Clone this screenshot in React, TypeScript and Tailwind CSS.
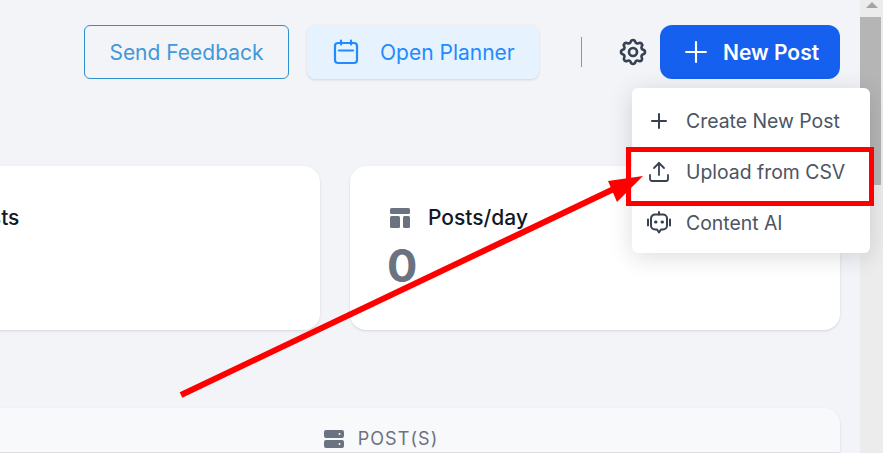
import { Plus, Upload } from 'lucide-react';
import { TbSettings } from 'react-icons/tb';

function CalendarIcon() {
  return (
    <svg width="26" height="26" viewBox="0 0 26 26" fill="none" stroke="currentColor" strokeWidth="2.2" strokeLinecap="round" strokeLinejoin="round">
      <rect x="2" y="4" width="22" height="20" rx="3" />
      <path d="M8 1.500v4M18 1.500v4" />
      <path d="M6 11.500h14" />
    </svg>
  );
}

function BotIcon() {
  return (
    <svg width="24" height="24" viewBox="0 0 24 24" fill="none" stroke="currentColor" strokeWidth="2" strokeLinecap="round" strokeLinejoin="round">
      <path d="M12 1v2.500" />
      <path d="M8 3.500h8a4 4 0 0 1 4 4v7a4 4 0 0 1-4 4h-2l-2 3-2-3H8a4 4 0 0 1-4-4v-7a4 4 0 0 1 4-4z" />
      <path d="M8.500 11h.5M15 11h.5" strokeWidth="3" />
      <path d="M1 8.500v6M23 8.500v6" />
    </svg>
  );
}

function LayoutIcon() {
  return (
    <svg width="24" height="24" viewBox="0 0 24 24" fill="currentColor">
      <rect x="2" y="2" width="20" height="6" rx="1.500" />
      <rect x="2" y="10" width="10" height="12" rx="1.500" />
      <rect x="15" y="10" width="7" height="12" rx="1.500" />
    </svg>
  );
}

function ServerIcon() {
  return (
    <svg width="20" height="18" viewBox="0 0 20 18" fill="currentColor">
      <path fillRule="evenodd" d="M2 0h16a2 2 0 0 1 2 2v4a2 2 0 0 1-2 2H2a2 2 0 0 1-2-2V2a2 2 0 0 1 2-2zM15.500 3a1 1 0 1 0 0 2 1 1 0 0 0 0-2z" />
      <path fillRule="evenodd" d="M2 10h16a2 2 0 0 1 2 2v4a2 2 0 0 1-2 2H2a2 2 0 0 1-2-2v-4a2 2 0 0 1 2-2zM15.500 13a1 1 0 1 0 0 2 1 1 0 0 0 0-2z" />
    </svg>
  );
}

export default function App() {
  const menuItems = [
    { label: 'Create New Post', icon: <Plus size={24} strokeWidth={2} /> },
    { label: 'Upload from CSV', icon: <Upload size={28} strokeWidth={1.8} /> },
    { label: 'Content AI', icon: <BotIcon /> },
  ];

  return (
    <div className="relative flex h-[453px] w-[883px] overflow-hidden bg-[#f2f4f8] font-['Inter',sans-serif]">
      <main className="flex min-w-0 flex-1 flex-col items-end pr-5">
        {/* Top actions */}
        <div className="mt-[25px] flex h-[54px] shrink-0 items-center">
          <button className="h-[54px] w-[205px] rounded-md border border-[#2f8fcf] pt-[2px] text-[21px] text-[#4298d8]">
            Send Feedback
          </button>
          <button className="ml-[18px] flex h-[54px] w-[232px] items-center rounded-lg bg-[#e6f2fd] pl-[26px] text-[21px] text-[#1f8bff] shadow-sm">
            <CalendarIcon />
            <span className="ml-[21px] pt-[2px]">Open Planner</span>
          </button>
          <div className="ml-[42px] h-[30px] w-px bg-[#8a94a3]" />
          <TbSettings size={32} className="ml-[35px] text-[#374151]" />
          <button className="ml-[11px] flex h-[54px] w-[180px] items-center rounded-xl bg-[#1660f0] pl-[19px] text-[21px] font-semibold text-white">
            <Plus size={34} strokeWidth={1.5} />
            <span className="ml-[10px] pt-[2px]">New Post</span>
          </button>
        </div>

        {/* Stat cards */}
        <div className="mt-[87px] flex h-[164px] shrink-0 gap-[30px]">
          <div className="h-full w-[490px] rounded-2xl bg-white pl-[38px] pt-[38px] shadow-sm">
            <div className="flex h-[27px] items-center gap-[17px] text-[#6b7280]">
              <LayoutIcon />
              <span className="text-[21px] font-medium text-[#111827]">Total Posts</span>
            </div>
          </div>
          <div className="h-full w-[490px] rounded-2xl bg-white pl-[37px] pt-[38px] shadow-sm">
            <div className="flex h-[27px] items-center gap-[16px] pl-[1px] text-[#6b7280]">
              <LayoutIcon />
              <span className="text-[21px] font-medium text-[#111827]">Posts/day</span>
            </div>
            <div className="mt-[11px] text-[45px] font-bold leading-[48px] text-[#6b7280]">0</div>
          </div>
        </div>

        {/* Post list */}
        <div className="mt-[78px] flex w-[918px] shrink-0 justify-center rounded-t-2xl bg-[#f8f9fb] pt-[17px] shadow-sm">
          <div className="flex items-center gap-[14px] text-[#6b7280]">
            <ServerIcon />
            <span className="text-[18px] tracking-[0.06em]">POST(S)</span>
          </div>
        </div>
      </main>

      {/* Scrollbar */}
      <div className="flex w-[23px] shrink-0 flex-col items-center bg-[#ececec]">
        <div className="mt-[2px] h-0 w-0 border-x-[6px] border-b-[6px] border-x-transparent border-b-[#a3a3a3]" />
        <div className="mt-[9px] h-[168px] w-[21px] self-start bg-[#b5b5b5]" />
      </div>

      {/* Dropdown menu */}
      <div className="absolute left-[632px] top-[88px] flex h-[165px] w-[238px] flex-col rounded-md bg-white pt-[7px] shadow-[0_4px_24px_rgba(0,0,0,0.14)]">
        {menuItems.map((item) => (
          <div key={item.label} className="flex h-[51px] items-center pl-[15px] text-[19.4px] text-[#4b5563]">
            <span className="flex w-[24px] justify-center text-[#374151]">{item.icon}</span>
            <span className="ml-[15px] pt-[2px]">{item.label}</span>
          </div>
        ))}
      </div>

      {/* Annotation */}
      <div className="absolute left-[626px] top-[147px] h-[59px] w-[248px] border-[5px] border-[#ff0000]" />
      <svg className="absolute left-0 top-0" width="883" height="453" viewBox="0 0 883 453">
        <line x1="181" y1="395" x2="620" y2="186" stroke="#ff0000" strokeWidth="6" />
        <polygon points="643,176 608,181 617,202" fill="#ff0000" />
      </svg>
    </div>
  );
}
